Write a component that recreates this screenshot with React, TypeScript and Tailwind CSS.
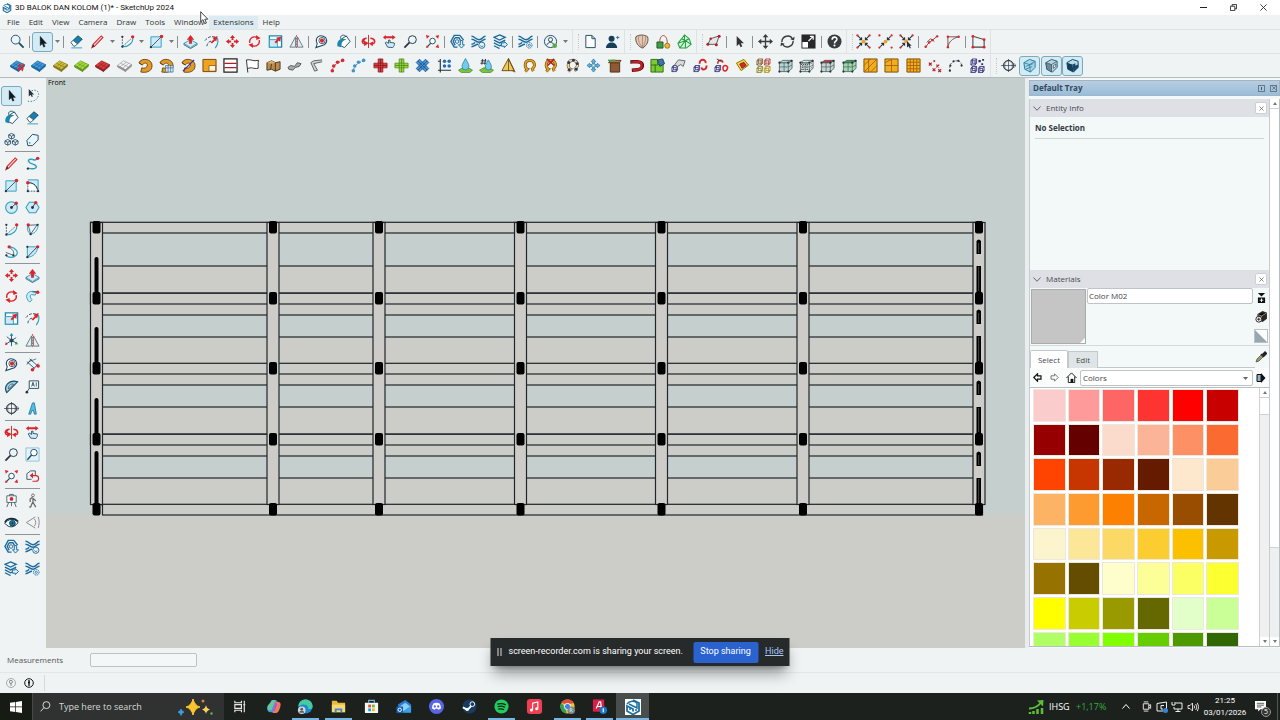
import { useState } from "react";
import type { ReactNode } from "react";

const RED = "#d9262c";
const TEAL = "#2f9fc0";
const PALE = "#cfeaf5";
const NAVY = "#1f4a63";
const TRIM = "#1c6a9c";
const INK = "#26323c";

// small square/round end points used by most draw tools
const Dot = ({ x, y, c = INK, r = 1.2 }: { x: number; y: number; c?: string; r?: number }) => (
  <circle cx={x} cy={y} r={r} fill={c} stroke="none" />
)

const Sheet = ({ top, side }: { top: string; side: string }) => (
  <g stroke={side} strokeWidth=".6">
    <path d="M.5 8 7 3l8.500 4L9 12.500Z" fill={top} />
    <path d="M.5 8v1.500L9 14.500v-2zM15.500 7v1.800L9 14.500v-2z" fill={side} />
    <path d="m3.700 5.600 8.600 4.200M3.300 9.300 10 4.500M6 10.900l6.500-5.200" />
  </g>
)

const Hook = ({ c = "#e6a21b", children }: { c?: string; children?: ReactNode }) => (
  <>
    <path d="M3.500 14.500 6 12C2 10 2.500 2.500 8 2.500s7 6 3 9l1 2.500" stroke="#5f4310" strokeWidth="3" />
    <path d="M3.500 14.500 6 12C2 10 2.500 2.500 8 2.500s7 6 3 9l1 2.500" stroke={c} strokeWidth="1.800" />
    {children}
  </>
)

const Bend = ({ children }: { children?: ReactNode }) => (
  <>
    <path d="M1 5C4-1 15 1 15 8s-7 8-12 7l1-4.500c3 1 6 0 6-3S6 5 4.500 7.500Z" fill="#e39a26" stroke="#5d3b0d" strokeWidth=".9" />
    <path d="m1 5 3.500 2.500" stroke="#5d3b0d" />
    {children}
  </>
)

const Plus = ({ c, dark }: { c: string; dark: string }) => (
  <path d="M5.500 1h5v4.500H15v5h-4.500V15h-5v-4.500H1v-5h4.500zM5.500 5.500h5v5h-5zM8 1v14M1 8h14" fill={c} stroke={dark} strokeWidth=".8" />
)

const Cage = ({ fill, top }: { fill: string; top?: string }) => (
  <>
    <path d="M1.500 5H11l4-2v8l-4 3.500H1.500z" fill={fill} stroke="#3c5a58" strokeWidth=".8" />
    <path d="m1.500 5 3.500-2.500h10L11 5z" fill={top ?? fill} stroke="#3c5a58" strokeWidth=".8" />
    <path d="M11 5v9.500M1.500 9.500H11l4-2M6.500 5v9.500" stroke="#3c5a58" strokeWidth=".7" />
    <Dot x={1.500} y={5} /><Dot x={11} y={5} /><Dot x={1.500} y={14.500} /><Dot x={11} y={14.500} /><Dot x={14.500} y={3} />
  </>
)

const Cube = ({ x = 0, y = 0, c = "#38317c" }: { x?: number; y?: number; c?: string }) => (
  <path
    transform={`translate(${x} ${y})`}
    d="M1 3h4.500v4.500H1zM2.500 1H7v4.500H2.500zM1 3l1.500-2M5.500 3 7 1M5.500 7.500 7 5.500M1 7.500l1.500-2"
    stroke={c}
    strokeWidth=".9"
  />
)

const Layers = () => (
  <path d="M.5 2.500c4 0 4 3.500 8 3.500s3.500-3.500 7-3.500M.5 5.500c4 0 4 3.200 8 3.200s3.500-3.200 7-3.200M.5 13.500c3.500 0 4-2.500 7-2.500M.5 10.800c2.500 0 3-1.300 4-1.800" stroke={TRIM} strokeWidth="1.600" />
)

const Grid = ({ d }: { d: string }) => (
  <>
    <path d="M1 1h14v14H1z" fill="#f2ae1c" stroke="#7c4b06" />
    <path d={d} stroke="#a4600a" strokeWidth=".9" />
  </>
)

const Snap = ({ d, children }: { d: string; children?: ReactNode }) => (
  <>
    <path d={d} stroke={INK} strokeWidth="1.100" />
    {children}
  </>
)

const icons: Record<string, ReactNode> = {
  Search: <><circle cx="6" cy="6" r="4.700" fill="#e8f6fb" stroke={NAVY} /><path d="m9.500 9.500 5 5" stroke={NAVY} strokeWidth="2" /></>,
  Select: <path d="M5.500 2.500v10l2.200-2 1.600 3.500 1.500-.8L9.300 10h3z" fill="#101820" stroke="#101820" strokeWidth=".4" />,
  Lasso: <><path d="M7 3c5-2 9 1 7 6s-7 6-11 5" stroke="#2f86a8" strokeDasharray="1.500 1.500" /><path d="M4 1v8l2-1.700 1.200 2.400 1.200-.7L7.300 7h2.400z" fill={INK} /></>,
  Eraser: <><path d="m2 9 7.500-7L14 5.500 6.500 13H5z" fill="#fff" stroke={NAVY} strokeWidth=".9" /><path d="m4.500 7 5-5L14 5.500l-5 5z" fill="#167fae" stroke={NAVY} strokeWidth=".7" /><path d="M2.500 14.800H14" stroke={TEAL} /></>,
  Pencil: <><path d="M2 14.500 3.300 11 12 2l1.800 1.700L5 13z" fill="#f6d8d8" stroke={RED} strokeWidth="1.100" /><path d="m2 14.500 1.300-3.500L5 13z" fill={INK} /></>,
  Freehand: <><path d="M3 13c9 2 12-2 6-4S2 4 6 3.500 10 6 13 3" stroke={TEAL} strokeWidth="1.500" /><Dot x={3} y={13.500} /><Dot x={13.500} y={2.500} c={RED} r={1.800} /></>,
  Arc: <><path d="M2.500 2.500v11L12 5" stroke={NAVY} strokeWidth=".8" strokeDasharray="2 1" /><path d="M13.500 3c1 6-4 11-11 10.500" stroke={TEAL} strokeWidth="1.200" /><Dot x={2.500} y={3} /><Dot x={2.500} y={13.500} /><Dot x={13.500} y={3} c={RED} r={1.800} /></>,
  Rectangle: <><path d="M2 3h11v11H2z" fill={PALE} stroke={TEAL} /><path d="m2 14 11-11" stroke={NAVY} strokeWidth=".9" /><Dot x={2} y={14} /><Dot x={13.300} y={2.700} c={RED} r={1.900} /></>,
  "Rotated Rectangle": <><path d="M3 2h11v12" fill={PALE} stroke={TEAL} /><path d="M3 5v9h11C13 8 9 5 3 5z" fill="#fff" stroke={NAVY} strokeWidth=".9" strokeDasharray="2 1" /><path d="M3 5c6 0 9 3 10 7" stroke={NAVY} /><Dot x={3} y={5} c={RED} r={1.900} /><Dot x={3} y={14} /><Dot x={14} y={14} /></>,
  Circle: <><circle cx="8" cy="8" r="6.200" fill={PALE} stroke={TEAL} strokeWidth="1.200" /><path d="m8 8 4.500-4" stroke={NAVY} /><Dot x={8} y={8} r={1.500} /><Dot x={13} y={3.500} c={RED} r={1.800} /></>,
  Polygon: <><path d="M4.500 2.500h7L15 8l-3.500 5.500h-7L1 8z" fill={PALE} stroke={TEAL} strokeWidth="1.100" /><path d="m8 8 3-5" stroke={NAVY} /><Dot x={8} y={8} r={1.500} /><Dot x={11.500} y={2.800} c={RED} r={1.800} /></>,
  "2 Point Arc": <><path d="M3.500 3.500 13 3 6 13z" stroke={NAVY} strokeWidth=".8" /><path d="M3 4c-1 4 0 7 3 9 5-1 7-4 8-9" stroke={TEAL} /><Dot x={3.500} y={3} c={RED} r={1.800} /><Dot x={13.500} y={3} /><Dot x={6} y={13} /></>,
  "3 Point Arc": <><path d="M6 3c7 1 10 6 7 9s-8 3-11 0" stroke={TEAL} strokeWidth="1.200" /><path d="M6 4c4 2 5 5 4 8M2 9l8 3" stroke={NAVY} strokeWidth=".8" /><Dot x={5.500} y={3} c={RED} r={1.800} /><Dot x={2.500} y={12} /><Dot x={10} y={12} /></>,
  Pie: <><path d="M2.500 3v11C9 14 13 9 13.500 3z" fill={PALE} stroke={TEAL} /><path d="M2.500 14 13 3" stroke={NAVY} /><Dot x={2.500} y={3} /><Dot x={2.500} y={14} /><Dot x={13.500} y={3} c={RED} r={1.800} /></>,
  "Push/Pull": <><path d="m1 10 7-4 7 4-7 4.500z" fill={PALE} stroke={TEAL} /><path d="M1 10v1.500l7 4 7-4V10" stroke={NAVY} strokeWidth=".8" /><path d="M6.500 10.500V6H4l4-5 4 5H9.500v4.500z" fill={RED} /></>,
  Offset: <><path d="M1 7c4-5 9-5 12-3M3 13c1-5 4-6 7-5" stroke={NAVY} strokeDasharray="3 1.500" /><path d="M14 4c2 4 1 7-2 11" stroke={TEAL} strokeWidth="1.200" /><path d="m7 9 3.500-3.500L9 4l5.500-2L13 8l-1.200-1.200L8.500 10z" fill={RED} /></>,
  Move: <path d="m8 1 2.700 3.300H9V6.500H7V4.300H5.300zM8 15l2.700-3.300H9V9.500H7v2.200H5.300zM1 8l3.300-2.700V7h2.200v2H4.300v1.700zM15 8l-3.300-2.700V7H9.500v2h2.200v1.700z" fill={RED} />,
  Rotate: <><path d="M3 9.500C2 5 6 2 10.500 3.500M13 6.500c1 4.500-3 7.500-7.500 6" stroke={RED} strokeWidth="1.500" /><path d="m9.500 1 5 3.500-4.500 1.800zM6.500 15l-5-3.500L6 9.700z" fill={RED} /></>,
  "Follow Me": <><path d="M5 14C-1 9 2 2 8 2.500l4 1-1 3-4-.5c-2 0-2 3 .5 5.500z" fill={PALE} stroke={TEAL} /><path d="M8 3h5.500" stroke={NAVY} /><Dot x={13.500} y={3.500} c={RED} r={1.900} /></>,
  Scale: <><path d="M1.500 2h13v12h-13z" fill="#fff" stroke="#1c86ad" strokeWidth="1.400" /><path d="M1.500 6H10v8H1.500z" fill={PALE} stroke={TEAL} /><path d="m7 8.500 3-3L8.500 4l5.500-1-1 5.500-1.500-1.500-3 3z" fill={RED} /></>,
  Flip: <><path d="M7 3v11H1zM9 3v11h6z" fill="#e3edf0" stroke="#566d78" strokeWidth=".9" /><path d="M8 1v14" stroke={RED} strokeWidth=".8" strokeDasharray="2 1" /></>,
  Axes: <><path d="M8 8V2M8 8l6 3M8 8l-6 4M8 8 3 4M8 8l5-3M8 8v6" stroke={NAVY} strokeWidth=".9" /><path d="m8 0 2 3H6z" fill="#1688b5" /><path d="m15 12-3.500.3L13 9z" fill="#2c9a46" /><path d="m1 13 1-3.500 2 2.500z" fill={RED} /><Dot x={8} y={8} r={2.200} c={NAVY} /></>,
  "Tape Measure": <><path d="M2.500 8C2 3 6 1 10 2.500s5 6 1 9L2 14.500l1.500-4z" fill="#fff" stroke={NAVY} strokeWidth="1.100" /><circle cx="8.500" cy="7" r="3.300" stroke={NAVY} strokeWidth=".9" /><Dot x={8.500} y={7} c={RED} r={2.200} /></>,
  Dimension: <><path d="m2 5 8 7M5 2l8 7M2 8l5-6M9 13l5-6" stroke={NAVY} strokeWidth=".9" /><path d="M12 2 4 5" stroke={NAVY} strokeWidth=".7" /><Dot x={8} y={13.500} c={RED} r={1.900} /><Dot x={14} y={9.500} c={RED} r={1.900} /></>,
  Protractor: <><path d="M3 14.500C-1 8 5 0 14.500 3L3 14.500z" fill="#9bd1e6" stroke={NAVY} strokeWidth="1.200" /><path d="M5 10.500C4.500 7.500 7 5 10 5.500z" fill="#fff" stroke={NAVY} strokeWidth=".9" /></>,
  Text: <><path d="M4.500 2h10v8h-10z" stroke={NAVY} fill="#fff" /><path d="m7 8 1.500-4.500L10 8M7.500 6.500h2M12 3.500V8M4.500 10 2 14" stroke={NAVY} strokeWidth=".9" /><Dot x={2} y={14} r={1.400} /></>,
  "Section Plane": <><circle cx="8" cy="8" r="5.500" stroke={INK} strokeWidth=".9" /><path d="M0 8h16M8 1v14M4 5l4-2.500L12 5v6l-4 2.500L4 11zM13.500 5.500 16 8l-2.500 2.500" stroke={INK} strokeWidth=".7" /></>,
  "3D Text": <path d="m4 14 4-12h2l2 12h-2l-1-4H7.500L6 14z" fill="#58bbdf" stroke="#187ba2" strokeWidth=".9" />,
  Paint: <><path d="m5 6 6-4 4 6-6 6.500L4 12z" fill="#fff" stroke={NAVY} /><path d="M1.500 13C1 8 3 5 8 5c2 0 3 1 3 1-4 1-5 2-5.500 8z" fill="#1c86ad" /><path d="M5 5c-1-4 4-5 6-2" stroke={NAVY} /></>,
  Components: <path d="M8 1.500 11 3v3L8 7.500 5 6V3zM4 8l3 1.500v3L4 14l-3-1.500v-3zM12 8l3 1.500v3L12 14l-3-1.500v-3zM5 3l3 1.500L11 3M8 4.500v3M1 9.500 4 11l3-1.500M4 11v3M9 9.500l3 1.500 3-1.500M12 11v3" stroke={NAVY} strokeWidth=".9" />,
  Tag: <><path d="m2 9 6-6.500 6 1v5L8 14.500H3z" fill="#e8f6fb" stroke={NAVY} /><Dot x={5} y={11.500} r={0.900} c={TEAL} /></>,
  Orbit: <><path d="M6 4.500C1 4.500.5 9 3 10.500M10 4.500c5 0 5.500 4.500 3 6M4.500 5C1 7 4 9.500 7 9.500" stroke={RED} strokeWidth="1.700" /><path d="m3 8 4.500 2L3.500 13zM13 8l-4.500 2 4 3z" fill={RED} /><path d="M8 1v14" stroke={RED} strokeWidth="1" /></>,
  Pan: <><path d="M1 3.500 4 1v1.500h7V1l3.500 2.500L11 6V4.500H4V6z" fill={RED} /><path d="M6 14 3.500 9.500l1-1L7 10V6.500h1.500V9L13 9.500c1 2-.5 3.500-1.500 5z" fill={PALE} stroke={NAVY} strokeWidth=".9" /></>,
  Zoom: <><circle cx="10" cy="6" r="4.200" fill="#e8f6fb" stroke={INK} /><path d="m7 9-5.500 5.500" stroke={INK} strokeWidth="1.800" /></>,
  "Zoom Window": <><path d="M1 1h14v14H1z" stroke="#8bc2d6" fill="#e4f3f8" /><circle cx="9.500" cy="6" r="3.500" fill="#fff" stroke={NAVY} /><path d="m7 8.500-4.500 5" stroke={NAVY} strokeWidth="1.500" /></>,
  "Zoom Extents": <><circle cx="8" cy="7.500" r="3" stroke={NAVY} fill="#fff" /><path d="m6 10-4 4" stroke={NAVY} strokeWidth="1.300" /><path d="m1 1 4 1-3 3zM15 1l-1 4-3-3zM15 15l-4-1 3-3zM1 15l1-3 2 2z" fill={RED} /></>,
  Previous: <><path d="M2 11V5l4-3h5v5M2 11h5" stroke={NAVY} strokeWidth=".9" /><path d="M7 7h4.500c4 0 4 6 0 6H8" stroke={RED} strokeWidth="1.200" /><path d="m5 7 3.500-3v6z" fill={RED} /></>,
  "3D Warehouse": <><path d="M10.500 1.500h-6L1 8l3.500 6H8M10.500 1.500l4 5M5.500 4h4l1.800 3M5.500 4 3.500 8l2 4" stroke={TRIM} strokeWidth="1.500" /><path d="m5.700 7 1.800-1 1.800 1v2L7.500 10 5.700 9z" stroke={TRIM} /><path d="M11 7h2.500v4.500h2L12.200 15 9 11.500h2z" fill="#d9eef7" stroke={TRIM} /></>,
  "Share Model": <><Layers /><circle cx="11.500" cy="12" r="3.300" fill="#eaf5fa" stroke={TRIM} /><path d="M10 12.500c1 1 2 1 3 0" stroke={TRIM} /></>,
  "Share Component": <><path d="m7 1 6 2.500-6 3-6-3zM1 6.500l6 3 6-3M1 9.500l6 3 2-.7M1 12.500l6 3" stroke={TRIM} strokeWidth="1.400" /><path d="M9 9.500h3V8l3.500 3.200L12 14.500V13H9z" fill="#d9eef7" stroke={TRIM} /></>,
  "Extension Manager": <><Layers /><circle cx="12" cy="12" r="3" fill="#eaf5fa" stroke={TRIM} strokeDasharray="1.500 .700" /><circle cx="12" cy="12" r="1.200" stroke={TRIM} strokeWidth=".8" /></>,
  Account: <><circle cx="8" cy="8" r="6.500" stroke={NAVY} /><circle cx="8" cy="6" r="2.200" stroke={NAVY} /><path d="M4 12c1-4 7-4 8 0" stroke={NAVY} /><circle cx="12.500" cy="12.500" r="2.500" fill="#55ad49" /></>,
  "New File": <path d="M3 1.500h6.500L13 5v9.500H3zM9.500 1.500V5H13" fill="#fff" stroke={NAVY} />,
  "Add Person": <><circle cx="7" cy="5" r="3.200" fill="#15405c" /><path d="M1 15c0-8 12-8 12 0z" fill="#15405c" /><path d="M13.500 2v3.500M11.800 3.700h3.500" stroke="#2d7da6" /></>,
  Shell: <><path d="M2 3c3-2.500 9-2.500 12.500 0 1.500 5-1 9-5 12C5 14 1 9 2 3z" fill="#e4c8b4" stroke="#5e4636" /><path d="M5 2c-1 5 1 9 4.500 13M9 1.500V14M12.500 2.500c0 4-1 8-3 12" stroke="#9c7e6c" strokeWidth=".8" /></>,
  "Rope Box": <><path d="M1 8.500h6.500V15H1z" fill="#3f9c4b" stroke="#1e5c28" /><path d="M4 8.500c0-9.500 8-9 8 1" stroke="#b43a31" /><circle cx="12" cy="12.500" r="2.700" fill="#f0b43c" stroke="#a56f10" /></>,
  "Green Gem": <path d="m8 1 5 4 2 6-5 4H3l-2-5 4-5zM5 5l4 2 4-2M9 7v8M9 7l-6 8M1 10l8-3 6 4M8 1v6" fill="#d9f3da" stroke="#1fa03f" strokeWidth="1.100" />,
  "Edit Polygon": <><path d="m2 11 3-6 9-3-3 9z" stroke="#555" fill="#e3e7ea" /><Dot x={2} y={11} c="#b71c22" r={1.600} /><Dot x={5} y={5} c="#b71c22" r={1.300} /><Dot x={14} y={2.500} c="#b71c22" r={1.600} /><Dot x={11} y={11.500} c="#b71c22" r={1.600} /></>,
  "Dark Select": <path d="M5 2v11l2.500-2.300L9.200 14l1.800-.9-1.600-3.300h3.300z" fill="#333" />,
  "Dark Move": <path d="m8 0 3 3.500H8.700v3.800h3.800V5L16 8l-3.500 3V8.700H8.700v3.800H11L8 16l-3-3.500h2.300V8.700H3.500V11L0 8l3.500-3v2.300h3.800V3.500H5z" fill="#3a3d40" />,
  "Dark Rotate": <><path d="M2 8.500C2 1.500 11 .5 13 5M14 7.500c0 7-9 8-11 3.500" stroke="#3a3d40" strokeWidth="1.500" /><path d="m15.500 3-.5 4-4-1.500zM.5 13l.5-4 4 1.500z" fill="#3a3d40" /></>,
  "Dark Scale": <><path d="M.5.5h15v15H.5z" fill="#26282a" /><path d="M1.500 8.500h6v6h-6z" fill="#fff" /><path d="m8 7.500 5-5M9.500 2.500H13V6" stroke="#fff" strokeWidth="1.300" /></>,
  Help: <><circle cx="8" cy="8" r="7.500" fill="#3a3d40" /><path d="M5.500 6c0-3.500 5.500-3.500 5 0-.3 1.700-2.500 1.500-2.500 4" stroke="#fff" strokeWidth="1.700" /><Dot x={8} y={12.300} c="#fff" r={1.100} /></>,
  "Snap Both": <Snap d="M2 2l4 4M14 2l-4 4M2 14l4-4M14 14l-4-4M6 3.500V6H3.500M10 3.500V6h2.500M6 12.500V10H3.500M10 12.500V10h2.500"><Dot x={8} y={8} c="#eda01c" r={2} /><Dot x={1.500} y={1.500} c={RED} /><Dot x={14.500} y={1.500} c={RED} /><Dot x={1.500} y={14.500} c={RED} /><Dot x={14.500} y={14.500} c={RED} /></Snap>,
  "Snap Mid": <Snap d="M13.500 2.500 10 6M2.500 13.500 6 10M10 3.500V6h2.500M6 12.500V10H3.500"><Dot x={8} y={8} c="#eda01c" r={2} /><Dot x={1.500} y={1.500} c={RED} /><Dot x={14.500} y={1.500} c={RED} /><Dot x={1.500} y={14.500} c={RED} /><Dot x={14.500} y={14.500} c={RED} /></Snap>,
  "Snap Pick": <Snap d="M2 2l4 4M14 2l-4 4M2 14l4-4M6 3.500V6H3.500M10 3.500V6h2.500M6 12.500V10H3.500"><Dot x={7.500} y={7.500} c="#eda01c" r={2} /><path d="M8.500 7.500v7l1.700-1.500 1.500 2.500 1-.7-1.200-2.300h2z" fill={INK} /><Dot x={1.500} y={1.500} c={RED} /><Dot x={14.500} y={1.500} c={RED} /><Dot x={1.500} y={14.500} c={RED} /></Snap>,
  Polyline: <><path d="m1.500 14 4-5 3-2 6-5M3 9l4-4 4 3" stroke="#7a4a4a" /><Dot x={1.800} y={13.500} c={RED} r={1.300} /><Dot x={5.500} y={9} c={RED} r={1.300} /><Dot x={9} y={6.500} c={RED} r={1.300} /><Dot x={14} y={2.500} c={RED} r={1.300} /></>,
  Spline: <><path d="M2 3h11M2 3v11M2 14C3 8 7 5 13 3" stroke="#7a4a4a" /><Dot x={2} y={3} c={RED} r={1.300} /><Dot x={13.500} y={3} c={RED} r={1.300} /><Dot x={2} y={14} c={RED} r={1.300} /></>,
  Trapezoid: <><path d="M2 2.500 14 6v8H2z" stroke="#444" strokeWidth="1.100" /><Dot x={2} y={2.500} c={RED} r={1.500} /><Dot x={14} y={6} c={RED} r={1.500} /><Dot x={14} y={14} c={RED} r={1.500} /><Dot x={2} y={14} c={RED} r={1.500} /></>,
  "Sheet Number": <><Sheet top="#3e9bdb" side="#17609a" /><path d="m10.500 6-1 8M14 6l-1 8M8.500 8.500H15M8 11.500h6.500" stroke={RED} strokeWidth="1.300" /></>,
  "Blue Sheet": <Sheet top="#3e9bdb" side="#17609a" />,
  "Olive Sheet": <Sheet top="#cdbd35" side="#80731b" />,
  "Green Sheet": <Sheet top="#a2dc39" side="#5f8f1b" />,
  "Red Sheet": <Sheet top="#dc3a3c" side="#8d1b1e" />,
  "White Sheet": <Sheet top="#f4f4f4" side="#8d8d8d" />,
  Bend: <Bend />,
  "Bend Grid": <Bend><path d="M7 8h8v7H7zM7 10.500h8M9.700 8v7M12.400 8v7" fill="#d7e8f4" stroke="#48708d" strokeWidth=".8" /></Bend>,
  "Bend Axis": <Bend><path d="m2 14 12-12" stroke="#3c2d96" strokeWidth="1.300" /></Bend>,
  "Orange Corner": <><path d="M1 1.500h14v13H1z" fill="#f0a31f" stroke="#714608" /><path d="M7.500 8h7v6h-7z" fill="#fff3d9" stroke="#714608" strokeWidth=".7" /></>,
  Shelf: <><path d="M1 1h14v14H1z" fill="#fff" stroke="#222" strokeWidth="1.300" /><path d="M1.500 5.700h13M1.500 10.300h13" stroke="#a62027" strokeWidth="1.300" /></>,
  Flag: <path d="M3 15.500 1.500 2c5-1 7 2 13 .5-1 3 0 5-.5 8.500C9 12 7 9 2.500 11.500" fill="#fff" stroke="#2d2d2d" />,
  Block: <><path d="M1 5 6 3l4 2 5-1v8l-5 2-4-2-5 1z" fill="#bb8c4f" stroke="#4c3517" /><path d="m6 5-1 7M10 5v9" stroke="#4c3517" /><path d="m6 3 4 2-4 1-5-1z" fill="#d8b272" /></>,
  Twist: <path d="m1 10 3-2 4 1 3-4 4 1-2 3-4 1-3 3-4-1z" fill="#a8abae" stroke="#46494c" strokeWidth=".9" />,
  Gutter: <path d="M14 2 5 3 2 5l4 9 3-1-4-7 9-2" fill="#d3d5d7" stroke="#4d5052" strokeWidth=".9" />,
  "Red Nodes": <><path d="M2 14 4 9l4-4 6-2" stroke="#8d3d3d" strokeDasharray="1.500 1" /><Dot x={2.500} y={13.500} c={RED} r={1.900} /><Dot x={4} y={8.500} c={RED} r={1.900} /><Dot x={8} y={4.500} c={RED} r={1.900} /><Dot x={13.500} y={2.500} c={RED} r={1.900} /></>,
  "Blue Nodes": <><path d="M2 14 4 9l4-4 6-2" stroke="#4a7596" strokeDasharray="1.500 1" /><Dot x={2.500} y={13.500} c="#3e94cf" r={1.900} /><Dot x={4} y={8.500} c="#3e94cf" r={1.900} /><Dot x={8} y={4.500} c="#3e94cf" r={1.900} /><Dot x={13.500} y={2.500} c="#3e94cf" r={1.900} /></>,
  "Red Cross": <Plus c="#dd3b3f" dark="#871a1e" />,
  "Green Cross": <Plus c="#9bd93a" dark="#4b851a" />,
  "Blue Cross": <g transform="rotate(45 8 8)"><Plus c="#4595d8" dark="#1b4e86" /></g>,
  Array: <><path d="M3.500 1v12H15M1 3.500h2.500M1 13h2.500M3.500 15.500V13" stroke={INK} strokeWidth="1.200" /><Dot x={8} y={3.500} c="#286db0" r={1.900} /><Dot x={13} y={3.500} c="#286db0" r={1.900} /><Dot x={8} y={8.500} c="#286db0" r={1.900} /><Dot x={13} y={8.500} c="#286db0" r={1.900} /></>,
  Drop: <><path d="m.5 13 4.500-2.500h6l4.500 2.500-3 2.500h-9z" fill="#7cc23a" stroke="#417d1b" strokeWidth=".7" /><path d="M8 .5C6 4.500 4.300 6.500 4.300 9a3.700 3.700 0 0 0 7.400 0C11.700 6.500 10 4.500 8 .5z" fill="#74cbe8" stroke="#2280a6" strokeWidth=".8" /></>,
  "Drop Number": <><path d="m.5 13 4.500-2.500h6l4.500 2.500-3 2.500h-9z" fill="#7cc23a" stroke="#417d1b" strokeWidth=".7" /><path d="M10 2C8 5.500 6.700 7.500 6.700 9.500a3.300 3.300 0 0 0 6.600 0C13.300 7.500 12 5.500 10 2z" fill="#74cbe8" stroke="#2280a6" strokeWidth=".8" /><path d="m4 1-1 6M7 1 6 7M2 3h6M1.500 5.500h6" stroke={INK} /></>,
  Pyramid: <><path d="M8 .5 1 13.500h13z" fill="#f0c95c" stroke="#6b4e12" /><path d="M8 .5v13M8 1l6 12 1 2-3-1.500" stroke="#6b4e12" strokeWidth=".9" /></>,
  Loop: <Hook />,
  "Cut Loop": <Hook><path d="m4 1 8 7M12 1 5 8" stroke="#b41f25" strokeWidth="1.700" /></Hook>,
  "Node Loop": <Hook c="#e8d9a4"><Dot x={4} y={5} c="#2b2f6b" r={1.500} /><Dot x={9} y={2.300} c="#2b2f6b" r={1.500} /><Dot x={13} y={6} c="#2b2f6b" r={1.500} /><Dot x={4.500} y={12.500} c="#2b2f6b" r={1.500} /><Dot x={12} y={12} c="#2b2f6b" r={1.500} /></Hook>,
  "Blue Move": <path d="m8 1 2.500 3H9v2.500H7V4H5.500zM8 15l2.500-3H9V9.500H7V12H5.500zM1 8l3-2.500V7h2.500v2H4v1.500zM15 8l-3-2.500V7H9.500v2H12v1.500z" fill="#63b8e2" stroke="#256b96" strokeWidth=".7" />,
  Box: <><path d="M3.500 5h10v10h-10z" fill="#8e5a34" stroke="#4a2c14" /><path d="m1.500 5 2.500-2.500h11L13.500 5z" fill="#b07a4b" stroke="#4a2c14" strokeWidth=".8" /><path d="M1 2.500h8" stroke="#3fa04a" strokeWidth="1.500" /></>,
  Magnet: <><path d="M2 4h7c7 0 7 8 0 8.500L3 13" stroke="#6d0d12" strokeWidth="3.800" /><path d="M3.500 4H9c6 0 6 8 0 8.500L4 13" stroke="#c42329" strokeWidth="2.200" /><path d="M2 2v4" stroke="#555" strokeWidth="1.500" /></>,
  Swap: <><path d="M1 1.500h7V7h6v8H1z" fill="#7ccb31" stroke="#2e6d12" /><path d="m8 2 5.500-1 2 5-5 3z" fill="#3e74a8" stroke="#1d3f63" /><path d="M5.500 7v8M1 7.500h7" stroke="#2e6d12" /></>,
  "Cube Arrow": <><Cube x={0} y={7} /><path d="m4 7 4-5 7 1-2 6-2.500-2L7 9z" fill="#d7dade" stroke="#555" strokeWidth=".9" /></>,
  "Cube Rotate": <><Cube x={0} y={7} /><path d="M7 6c0-6 7-5 6.500-.5M14.500 8c0 5-5 5.500-5.500 2" stroke={RED} strokeWidth="2" /></>,
  "Cube Rotate 2": <><Cube x={0} y={7} /><path d="M4 6c0-4.500 5-4.500 5.500-1M14.500 9c0 6-5 6-5 2s5-4 5 0z" stroke={RED} strokeWidth="1.600" /><path d="m3 1 5 3" stroke="#333" /></>,
  Diamond: <><path d="m1.500 5.500 8-4 5 6-8 6z" fill="#f4dc3b" stroke="#826e10" /><path d="m5 6.500 4.500-2 2.500 3.500L7.500 11z" fill={RED} stroke="#7c1115" strokeWidth=".8" /></>,
  "Four Cubes": <><Cube c="#83592f" /><Cube x={8} c="#b0463c" /><Cube y={8} c="#8a8c22" /><Cube x={8} y={8} c="#b59516" /></>,
  Cage: <Cage fill="#bcd3d1" />,
  "Cage Dense": <><Cage fill="#e3ebea" /><path d="M4 5v9M8.500 5v9M2 7h9l3-2M2 12h9l3-2" stroke="#222" strokeWidth=".8" strokeDasharray="1.200 1" /></>,
  "Cage Red": <Cage fill="#c8d3d2" top="#d43238" />,
  "Cage Green": <Cage fill="#a4d6ac" top="#3aa34b" />,
  "Hatch Grid": <Grid d="m1 8 7-7M1 15 15 1M8 15l7-7M6 1v14" />,
  "Quad Grid": <Grid d="M8 1v14M1 8h14M1 5l7-3.500" />,
  "Fine Grid": <Grid d="M4.500 1v14M8 1v14M11.500 1v14M1 4.500h14M1 8h14M1 11.500h14" />,
  "Red Marks": <path d="m2 5 3 3M5 5 2 8M10 7l3 3M13 7l-3 3M6 11l3 3M9 11l-3 3M12 12l3 3M15 12l-3 3M7 2.500l1.500 1.500M8.500 2.500 7 4" stroke="#b2262c" strokeWidth="1.300" />,
  "Dotted Arc": <><path d="M2 14C1 7 4 3 9 3s5 3 6 6" stroke={INK} strokeDasharray="2 1.500" strokeWidth=".8" /><Dot x={2} y={13.500} /><Dot x={2.500} y={8} /><Dot x={6} y={3.500} /><Dot x={11} y={3} /><Dot x={14.500} y={8} /></>,
  "Cube Array": <><Cube /><Cube y={8} /><Cube x={8} y={8} /><path d="M9 2h2.500v2.500H9zM13 1h2v2h-2zM12 5.500h2v2h-2z" fill="#2b2f6b" /></>,
  "Section Fill": <><path d="m2 5 6-3.500 6 2V10l-5 5-6-3z" fill="#a8d8ea" stroke="#2a7796" /><path d="m2 5 6 2 6-3.500M8 7l1 8M4 9l8-3M4 12l7-3" stroke="#2a7796" strokeWidth=".8" /></>,
  "Section Cut": <><path d="m2 5 6-3.500 6 2V10l-5 5-6-3z" fill="#b9d3df" stroke="#33566a" /><path d="m2 5 6 2v8L3 12z" fill="#6f8b99" stroke="#33566a" strokeWidth=".8" /><path d="m8 7 6-3.500M10 8l2.500-1.500V9L10 11z" fill="#e8f2f6" stroke="#33566a" strokeWidth=".8" /></>,
  "Section Display": <><path d="m2 5 6-3.500 6 2V10l-5 5-6-3z" fill="#b9dcea" stroke="#123f5c" /><path d="m2 5 6 2 1 8-6-3z" fill="#123f5c" /><path d="m8 7 3-1.500V8l3-1v3l-5 5z" fill="#17496a" /></>,
  Camera: <><path d="M3 3h10v7H3zM5 10l-2 5M11 10l2 5M8 10v4M6 3V1.500h4V3" stroke="#3d5564" strokeWidth=".9" fill="#fff" /><Dot x={8} y={6.300} c={RED} r={2} /></>,
  Walk: <><circle cx="8.500" cy="2.500" r="1.500" stroke="#666" strokeWidth=".9" /><path d="m8 4.500-2.500 2v3M8.500 5v5l3 5M8 10l-2 5-1.500-.3M9 6l2.500 2.500" stroke="#666" strokeWidth="1.300" /></>,
  "Look Around": <><path d="M1 9c3-5 10-6 14-1-4 6-10 6-14 1z" fill="#fff" stroke="#0d2f43" /><path d="M1 8c2-5 10-6 14-1" stroke="#0d2f43" strokeWidth="1.800" /><circle cx="9" cy="8.800" r="3" fill="#1a87b3" stroke="#0d2f43" /><Dot x={9} y={8.800} c="#0d2f43" r={1.200} /></>,
  "Field of View": <><path d="M11 2 1.500 8 11 14" stroke="#888" /><path d="M10 4c2 3 2 5 0 8M14 2c1.500 4 1.500 8 0 12" stroke="#888" /></>,
}

const draw = [
  "Search", "|", "Select*", "v", "|", "Eraser", "Pencil", "v", "Arc", "v", "Rectangle", "v", "|", "Push/Pull", "Offset", "Move", "Rotate",
  "Scale", "Flip", "|", "Tape Measure", "Paint", "|", "Orbit", "Pan", "Zoom", "Zoom Extents", "|", "3D Warehouse", "Share Model",
  "Share Component", "|", "Extension Manager", "|", "Account", "v",
]
const edit = ["Edit Polygon", "|", "Dark Select", "|", "Dark Move", "Dark Rotate", "Dark Scale", "|", "Help"]
const snaps = ["Snap Both", "Snap Mid", "Snap Pick", "|", "Polyline", "Spline", "|", "Trapezoid"]
const plugins = [
  "Sheet Number", "Blue Sheet", "Olive Sheet", "Green Sheet", "Red Sheet", "White Sheet", "Bend", "Bend Grid", "Bend Axis", "Orange Corner",
  "Shelf", "Flag", "Block", "Twist", "Gutter", "Red Nodes", "Blue Nodes", "Red Cross", "Green Cross", "Blue Cross", "Array", "Drop",
  "Drop Number", "Pyramid", "Loop", "Cut Loop", "Node Loop", "Blue Move", "Box", "Magnet", "Swap", "Cube Arrow", "Cube Rotate",
  "Cube Rotate 2", "Diamond", "Four Cubes", "Cage", "Cage Dense", "Cage Red", "Cage Green", "Hatch Grid", "Quad Grid", "Fine Grid",
  "Red Marks", "Dotted Arc", "Cube Array",
]
const sections = ["Section Plane", "Section Fill*", "Section Cut*", "Section Display*"]

const palette: (string[] | null)[] = [
  ["Select*", "Lasso"], ["Paint", "Eraser"], ["Components", "Tag"], null,
  ["Pencil", "Freehand"], ["Rectangle", "Rotated Rectangle"], ["Circle", "Polygon"], ["Arc", "2 Point Arc"], ["3 Point Arc", "Pie"], null,
  ["Move", "Push/Pull"], ["Rotate", "Follow Me"], ["Scale", "Offset"], ["Axes", "Flip"], null,
  ["Tape Measure", "Dimension"], ["Protractor", "Text"], ["Section Plane", "3D Text"], null,
  ["Orbit", "Pan"], ["Zoom", "Zoom Window"], ["Zoom Extents", "Previous"], null,
  ["Camera", "Walk"], ["Look Around", "Field of View"], null,
  ["3D Warehouse", "Share Model"], ["Share Component", "Extension Manager"],
]

const swatches = [
  "#fbcccc", "#fe9a9a", "#fe6565", "#fd3432", "#ff0000", "#c90000",
  "#960000", "#650000", "#fbdccc", "#fcb498", "#fd9064", "#fb6a30",
  "#ff4300", "#c83600", "#982900", "#651b00", "#fde7cd", "#facd98",
  "#fdb364", "#fd9a30", "#fd8100", "#c86700", "#984d00", "#633400",
  "#fbf4cc", "#fbe797", "#fbd964", "#fbcd30", "#fbc000", "#c89a00",
  "#967300", "#654d00", "#fdfecb", "#fcff98", "#fbff64", "#fcff30",
  "#ffff00", "#c9cd00", "#989a00", "#656700", "#e2ffca", "#caff98",
  "#b0ff64", "#98ff30", "#80ff00", "#66cd00", "#4c9a00", "#316700",
]

function Tool({ name }: { name: string }) {
  const active = name.endsWith("*")
  const key = name.replace("*", "")
  return (
    <button
      type="button"
      aria-label={key}
      className={
        active
          ? "flex h-5 w-[21px] shrink-0 items-center justify-center rounded-[3px] border border-[#7ea9bd] bg-[#d3ebf4]"
          : "flex h-5 w-[21px] shrink-0 items-center justify-center rounded-[3px]"
      }
    >
      <svg viewBox="0 0 16 16" fill="none" className="size-[15px] shrink-0">{icons[key]}</svg>
    </button>
  )
}

function ToolRow({ items }: { items: string[] }) {
  return (
    <>
      {items.map((item, i) => {
        if (item === "|") return <span key={i} className="mx-px h-3 w-[2px] shrink-0 border-l border-[#8b9094]" />
        if (item === "v") {
          return (
            <button key={i} type="button" aria-label="More" className="flex h-4 w-2 shrink-0 items-center justify-center">
              <svg viewBox="0 0 5 3" className="h-[3px] w-[5px]"><path d="M0 0h5L2.500 3z" fill="#777" /></svg>
            </button>
          )
        }
        return <Tool key={i} name={item} />
      })}
    </>
  )
}

const Grip = () => <span className="h-4 w-[6px] shrink-0 border-r border-dotted border-[#c4cacd]" />

const SketchUpMark = ({ className }: { className: string }) => (
  <svg viewBox="0 0 16 16" fill="none" className={className}>
    <path d="M8 1 14 4v8l-6 3.500L2 12V7l6 3v2.500" stroke="#1b6fa3" strokeWidth="1.800" />
    <path d="M2 5c2-3 8-4 10-.5V9L8 7 4 5M5 8v3M11 8v4" stroke="#1b6fa3" strokeWidth="1.500" />
  </svg>
)

// column / beam grid of the front elevation, in canvas units
const columns = [44, 220.5, 326.5, 468, 609, 750.5, 926.5]
const beams = [144, 215, 285, 356, 426]

function Model() {
  return (
    <svg viewBox="0 0 979 570" preserveAspectRatio="xMidYMid slice" className="block size-full" role="img" aria-label="Front view of beams and columns">
      <rect width="979" height="436" fill="#c5cfcd" />
      <rect y="436" width="979" height="134" fill="#cccdc8" />
      <g fill="#cccdc8" stroke="#20262a" strokeWidth="1.200">
        {beams.slice(0, 4).map((y, i) => (
          <g key={y}>
            {i > 0 && <rect x="56" y={y + 10} width="872" height="12" />}
            <rect x="56" y={y + 44} width="872" height="27" />
          </g>
        ))}
        {beams.map((y) => (
          <rect key={y} x={y === 426 ? 56.5 : 44.5} y={y + 0.3} width={y === 426 ? 880 : 888} height="10.700" />
        ))}
        {columns.map((x) => (
          <rect key={x} x={x + 0.5} y="144.500" width="12" height="282" fill="#cdccc9" />
        ))}
      </g>
      <g fill="#000">
        {columns.map((x) => beams.map((y) => <rect key={`${x}-${y}`} x={x + 2.5} y={y - 1} width="8" height="12.500" rx="2" />))}
        {[[179, 42], [249, 42], [320, 42], [373, 60]].map(([y, h]) => (
          <rect key={y} x="48.500" y={y} width="4" height={h} rx="2" />
        ))}
        {[161, 231, 302, 373].map((y) => (
          <g key={y}>
            <path d={`M930.500 ${y + 15}v-13q2.200-3 4.500 0v13z`} />
            <path d={`M932.700 ${y + 14}v-10`} stroke="#4b4949" />
            <path d={`M930.500 ${y + 27}h4.500v28h-4.500z`} />
            <path d={`M932.700 ${y + 28}v24`} stroke="#4b4949" />
          </g>
        ))}
      </g>
    </svg>
  )
}

const Close = ({ label }: { label: string }) => (
  <button type="button" aria-label={label} className="flex size-3 items-center justify-center rounded-[2px] border border-[#cdd0d5] bg-white">
    <svg viewBox="0 0 6 6" className="size-[5px]"><path d="m.5.5 5 5m0-5-5 5" stroke="#555" strokeWidth=".8" /></svg>
  </button>
)

function PanelTitle({ title }: { title: string }) {
  return (
    <div className="flex h-[18px] shrink-0 items-center bg-[#dfe0e6] pr-[2px] pl-[3px]">
      <svg viewBox="0 0 8 5" fill="none" className="h-[5px] w-2"><path d="m.5.5 3.500 3.800L7.500.5" stroke="#666" /></svg>
      <h2 className="ml-[5px] flex-1 text-[8px] text-[#444a50]">{title}</h2>
      <Close label={`Close ${title}`} />
    </div>
  )
}

const Arrow = ({ up }: { up?: boolean }) => (
  <span className="flex h-[9px] shrink-0 items-center justify-center bg-white">
    <svg viewBox="0 0 4 3" className="h-[3px] w-1"><path d={up ? "M0 3h4L2 0z" : "M0 0h4L2 3z"} fill="#777" /></svg>
  </span>
)

function Tray() {
  const [material, setMaterial] = useState("Color M02")

  return (
    <aside className="flex w-[255px] shrink-0 flex-col border-l-4 border-[#e9edef] bg-[#f3f8f9] pb-px">
      <div className="mt-[2px] flex h-4 shrink-0 items-center border border-[#a3b5c5] bg-linear-to-b from-[#b9cddf] to-[#98bedb] pr-[2px] pl-[3px]">
        <h1 className="flex-1 text-[8px] font-bold text-[#35475a]">Default Tray</h1>
        <button type="button" aria-label="Pin tray" className="mr-[5px] flex size-[7px] items-center justify-center border border-[#66798b]"><span className="h-[3px] w-px bg-[#44576a]" /></button>
        <button type="button" aria-label="Close tray" className="flex size-[7px] items-center justify-center border border-[#66798b]">
          <svg viewBox="0 0 6 6" className="size-1"><path d="m.5.5 5 5m0-5-5 5" stroke="#44576a" /></svg>
        </button>
      </div>
      <div className="mt-[3px] flex min-h-0 flex-1 border-r border-b border-[#b8bec4]">
        <div className="flex min-w-0 flex-1 flex-col border-x border-[#c6cbd0]">
          <PanelTitle title="Entity Info" />
          <div className="mx-[5px] h-[153px] shrink-0">
            <p className="border-b border-[#cfd3d6] pt-[5px] pb-1 text-[8px] leading-3 font-bold text-[#333a40]">No Selection</p>
          </div>
          <PanelTitle title="Materials" />
          <div className="flex h-[58px] shrink-0 border-b border-[#d5d9dc]">
            <div className="mt-px ml-px flex size-[55px] items-end justify-end border border-[#a9abad] bg-[#c5c5c5]">
              <svg viewBox="0 0 5 5" className="size-[5px]"><path d="M5 0v5H0z" fill="#fff" /></svg>
            </div>
            <input
              aria-label="Material name"
              value={material}
              onChange={(e) => setMaterial(e.target.value)}
              className="ml-px h-4 min-w-0 flex-1 rounded-[2px] border border-[#bfc4c8] bg-white px-px pb-[2px] text-[8px] text-[#444]"
            />
            <div className="flex w-4 flex-col items-center justify-between pt-[3px] pb-[2px]">
              <button type="button" aria-label="Display secondary pane" className="flex h-3 items-center">
                <svg viewBox="0 0 10 12" className="h-[11px] w-[9px]"><path d="M1 1h8L5 5zM1 6h8v6H1z" fill="#111" /><path d="M5 7v4M3 9h4" stroke="#fff" /></svg>
              </button>
              <button type="button" aria-label="Create material">
                <svg viewBox="0 0 12 12" className="size-[13px]"><path d="m2 4 5-3 4 1.500V8L7 11 3 9.500z" fill="#2a2622" /><path d="m2 4 4 1.500L11 2.500M6 5.500V10" stroke="#b8a98c" strokeWidth=".7" /><circle cx="3.500" cy="8.500" r="2.700" fill="#fff" stroke="#111" strokeWidth=".8" /><path d="M3.500 7v3M2 8.500h3" stroke="#111" strokeWidth=".8" /></svg>
              </button>
              <button type="button" aria-label="Default material" className="size-[14px] border border-[#b9c0c6] bg-white">
                <svg viewBox="0 0 12 12" className="size-3"><path d="M0 0v12h12z" fill="#97a7b0" /></svg>
              </button>
            </div>
          </div>
          <div className="flex h-[22px] shrink-0 items-end pr-[2px] text-[8px] text-[#444a50]">
            <button type="button" className="h-[18px] w-[38px] rounded-t-[2px] border border-b-0 border-[#c3c8cc] bg-white">Select</button>
            <button type="button" className="h-[17px] w-[30px] border border-b-0 border-[#c3c8cc] bg-[#dfe5e6]">Edit</button>
            <span className="flex-1 self-end border-b border-[#c3c8cc]" />
            <button type="button" aria-label="Sample paint" className="self-center">
              <svg viewBox="0 0 12 12" className="size-3"><path d="m1 11 1-3 4-4 2 2-4 4z" fill="#9b9a68" stroke="#444" strokeWidth=".7" /><path d="m6 3 3 3M7 4l3-3 1.500 1.500-3 3z" stroke="#222" strokeWidth="1.300" fill="#222" /></svg>
            </button>
          </div>
          <div className="flex h-[19px] shrink-0 items-center bg-[#fafcfc] pl-[3px]">
            <button type="button" aria-label="Back" className="mr-2"><svg viewBox="0 0 9 9" fill="none" className="size-[9px]"><path d="m.8 4.500 3.700-3.700v2H8v3.400H4.500v2z" stroke="#111" strokeWidth="1.200" /></svg></button>
            <button type="button" aria-label="Forward" className="mr-[7px]"><svg viewBox="0 0 9 9" fill="none" className="size-[9px]"><path d="M8.200 4.500 4.500.8v2H1v3.400h3.500v2z" stroke="#777" strokeWidth="1" /></svg></button>
            <button type="button" aria-label="In Model" className="mr-[3px]"><svg viewBox="0 0 12 12" fill="none" className="size-[11px]"><path d="M.5 6.500 6 1l5.500 5.500M2.500 5v6.500h7V5" stroke="#111" /><path d="M5 7.500h3v4H5z" fill="#111" /></svg></button>
            <div className="relative flex min-w-0 flex-1">
              <select aria-label="Library" className="h-4 w-full appearance-none rounded-[2px] border border-[#bfc4c8] bg-white px-[2px] text-[8px] text-[#444]">
                <option>Colors</option>
              </select>
              <svg viewBox="0 0 5 3" className="pointer-events-none absolute top-[7px] right-[5px] h-[3px] w-[5px]"><path d="M0 0h5L2.500 3z" fill="#666" /></svg>
            </div>
            <button type="button" aria-label="Details" className="flex w-4 justify-center"><svg viewBox="0 0 10 10" className="size-[10px]"><path d="M1 1.500h4v7H1z" fill="#8fb1d0" stroke="#111" /><path d="M5 0v10l4.500-5z" fill="#111" /></svg></button>
          </div>
          <div className="flex min-h-0 flex-1 border-t border-[#b8bec4] bg-white">
            <div className="min-w-0 flex-1 overflow-hidden pt-[2px] pl-1">
              <div className="grid w-[204px] grid-cols-6 gap-1">
                {swatches.map((color) => (
                  <button key={color} type="button" aria-label={color} style={{ backgroundColor: color }} className="aspect-square outline outline-[#ece8dd]" />
                ))}
              </div>
            </div>
            <div className="flex w-[10px] shrink-0 flex-col border-l border-[#cfd2d4] bg-[#f0f0f0]">
              <Arrow up />
              <span className="h-[18px] border-y border-[#cfd2d4] bg-white" />
              <span className="flex-1" />
              <Arrow />
            </div>
          </div>
        </div>
        <div className="flex w-[9px] shrink-0 flex-col bg-[#eeeff0]">
          <Arrow up />
          <span className="flex-[440] border-y border-[#cfd2d4] bg-white" />
          <span className="flex-[89]" />
          <Arrow />
        </div>
      </div>
    </aside>
  )
}

const apps: { name: string; open?: boolean; icon: ReactNode }[] = [
  { name: "Task View", icon: <path d="M3 3v2h7V3M3 15v-2h7v2M3 7h7v4H3zM13 3v12M12 7h2" stroke="#e8e8e8" strokeWidth="1.200" /> },
  { name: "Copilot", icon: <><path d="M7 2h4c2 0 2 3 3 5l-3 8H6c-3 0-4-2-3-5z" fill="#3b9be0" /><path d="M10 4h3c4 0 4 3 3 6s-2 6-5 6H8z" fill="#f2785c" /><path d="m8 2 3 0-4 11H4c-2 0-2-3-1-5z" fill="#67c5a2" /><path d="m11 4-3 10h2l3-7z" fill="#a05fd8" /></> },
  { name: "Edge", open: true, icon: <><circle cx="9" cy="9" r="7.500" fill="#1b8ad0" /><path d="M1.500 9c0-10 15-10 15 0 0 4-6 3-5 1 1-3-6-5-10-1z" fill="#45cba0" /><circle cx="5" cy="13" r="4" fill="#d5d9dc" /><Dot x={5} y={11.800} r={1.500} c="#5a6066" /><path d="M2.500 15.500c0-3 5-3 5 0z" fill="#5a6066" /></> },
  { name: "File Explorer", open: true, icon: <><path d="M2 3h5l1.500 2H16v10H2z" fill="#e9b73b" /><path d="M2 7h14v8H2z" fill="#f9d873" /><path d="M5 11h8v4h-2v-2H7v2H5z" fill="#3d8cd0" /></> },
  { name: "Microsoft Store", icon: <><path d="M2 5h14v10q0 1-1 1H3q-1 0-1-1z" fill="#f4f6f7" /><path d="M6 5V2.500h6V5" stroke="#62b7e0" strokeWidth="1.300" /><path d="M5.500 7h3v3h-3z" fill="#e8502d" /><path d="M9.500 7h3v3h-3z" fill="#7fb928" /><path d="M5.500 11h3v3h-3z" fill="#23a1e8" /><path d="M9.500 11h3v3h-3z" fill="#f5b71c" /></> },
  { name: "Outlook", icon: <><path d="m3 7 8-5 6 5v8H5z" fill="#2b7cd3" /><path d="m5 9 6-4 5 4-7 5z" fill="#8ed0f4" /><path d="m17 8-9 7.500h9z" fill="#38a3e8" /><path d="M1.500 9h7v7h-7z" fill="#1261b5" /><circle cx="5" cy="12.500" r="1.800" stroke="#fff" /></> },
  { name: "Discord", icon: <><circle cx="9" cy="9" r="8" fill="#5865e8" /><path d="M6 5.500c2-.7 4-.7 6 0 1.500 2 2 4 1.500 6L11 12.500l-1-1H8l-1 1-2.500-1c-.5-2 0-4 1.500-6z" fill="#fff" /><Dot x={7.200} y={9} c="#5865e8" /><Dot x={10.800} y={9} c="#5865e8" /></> },
  { name: "Steam", icon: <><circle cx="9" cy="9" r="7.500" fill="#183c60" /><path d="m2 10 5 2.500L12 7" stroke="#fff" strokeWidth="2" /><circle cx="12" cy="6.500" r="2.500" stroke="#fff" fill="#183c60" /><circle cx="6.500" cy="12" r="1.800" fill="#fff" /></> },
  { name: "Spotify", open: true, icon: <><circle cx="9" cy="9" r="7.500" fill="#22cc5c" /><path d="M4.500 6.500c3-1 6.500-.7 9 .8M5 9.200c2.700-.8 5.500-.5 7.500.7M5.500 11.800c2-.6 4.500-.4 6.200.7" stroke="#10241a" strokeWidth="1.300" /></> },
  { name: "Music", icon: <><rect x="1" y="1" width="16" height="16" rx="3.500" fill="#ee3f52" /><path d="M7 12.500v-7l5.500-1.200v7" stroke="#fff" strokeWidth="1.200" /><Dot x={5.800} y={12.700} c="#fff" r={1.600} /><Dot x={11.300} y={11.500} c="#fff" r={1.600} /></> },
  { name: "Chrome", open: true, icon: <><circle cx="9" cy="9" r="7.500" fill="#f3c432" /><path d="M2.500 5.200a7.500 7.500 0 0 1 13 0L9 7z" fill="#e04a3a" /><path d="M2.500 5.200 7 10l1 6.400A7.500 7.500 0 0 1 2.500 5.200z" fill="#2fa152" /><circle cx="9" cy="9" r="3.300" fill="#3e82ee" stroke="#fff" /><circle cx="13" cy="13" r="4" fill="#77898f" /><path d="M11.800 15v-4h1.500q1 1 0 2h-1.500m1.500 0 1 2" stroke="#dfe6e8" strokeWidth=".8" /></> },
  { name: "Autodesk Access", open: true, icon: <><path d="M2 1.500h12v13H2z" fill="#d71f47" /><path d="M5.500 11 8.700 4h1.500l.8 7M7 9h4" stroke="#fff" strokeWidth="1.300" /><circle cx="13" cy="13" r="4" fill="#1879cc" /><path d="M13 10.800v4.400" stroke="#fff" strokeWidth="1.300" /></> },
]

function Taskbar() {
  return (
    <footer className="flex h-[27px] shrink-0 items-stretch bg-[#1d211e] text-white">
      <button type="button" aria-label="Start" className="flex w-8 items-center justify-center bg-[#161b13]">
        <svg viewBox="0 0 12 12" className="size-3"><path d="M0 1.700 5.300 1v4.600H0zM6 .9 12 0v5.600H6zM0 6.300h5.300V11L0 10.300zM6 6.300h6V12l-6-.9z" fill="#fff" /></svg>
      </button>
      <label className="flex w-48 items-center border-l border-[#454846] bg-[#303231] pl-[7px]">
        <svg viewBox="0 0 12 12" fill="none" className="size-[11px]"><circle cx="7" cy="4.500" r="3.800" stroke="#e6e6e6" /><path d="M4.300 7.300.7 11.300" stroke="#e6e6e6" /></svg>
        <input aria-label="Search Windows" placeholder="Type here to search" className="ml-2 w-[118px] bg-transparent text-[9px] placeholder:text-[#d5d7d6]" />
        <svg viewBox="0 0 36 18" className="h-[18px] w-9">
          <path d="M16 1q1.500 6.500 7 8-5.500 1.500-7 8-1.500-6.500-7-8 5.500-1.500 7-8z" fill="#fcc52d" stroke="#fcc52d" />
          <path d="M29 7q.6 3.500 4 4.500-3.400 1-4 4.500-.6-3.500-4-4.500 3.400-1 4-4.500z" fill="#f8d05b" />
          <path d="M4 11q.6 2.500 3 3-2.400.7-3 3.500-.6-2.800-3-3.500 2.400-.5 3-3z" fill="#3f9fe0" stroke="#3f9fe0" strokeWidth=".7" />
          <circle cx="26" cy="3" r="1.500" fill="#e0803b" /><circle cx="34.500" cy="15.500" r="1.200" fill="#65b35a" />
        </svg>
      </label>
      <nav aria-label="Apps" className="flex w-[425px]">
        {apps.map((app) => (
          <button key={app.name} type="button" aria-label={app.name} className="flex flex-1 justify-center">
            <span className={app.open ? "flex h-full w-[27px] items-center justify-center border-b-2 border-[#77b5e2] pt-[2px]" : "flex h-full items-center justify-center"}>
              <svg viewBox="0 0 18 18" fill="none" className="size-[17px]">{app.icon}</svg>
            </span>
          </button>
        ))}
        <button type="button" aria-label="SketchUp" className="flex flex-1 items-center justify-center border-b-2 border-[#77b5e2] bg-[#494e4d] pt-[2px]">
          <SketchUpMark className="size-4 bg-white" />
        </button>
      </nav>
      <div className="ml-auto flex items-center text-[9px]">
        <svg viewBox="0 0 16 16" fill="none" className="mr-[5px] size-4"><path d="M1 9.500c5 0 9-2 12-6" stroke="#5bbf3a" strokeWidth="1.800" /><path d="m9 1.500 6.500-.5-.5 6.500z" fill="#5bbf3a" /><path d="M2 15v-2M5.500 15v-3M9.500 15v-5M14 15V9" stroke="#5bbf3a" strokeWidth="2.500" /></svg>
        <span className="w-[27px]">IHSG</span>
        <span className="w-[46px] text-[#2fae3e]">+1,17%</span>
        <button type="button" aria-label="Show hidden icons" className="mr-[11px]"><svg viewBox="0 0 8 5" fill="none" className="h-[5px] w-2"><path d="m.5 4.500 3.500-4 3.500 4" stroke="#fff" /></svg></button>
        <div className="flex w-[58px] items-center justify-between">
          <svg viewBox="0 0 12 12" fill="none" className="size-[11px]"><path d="M2.500 3h6v6h-6zM8.500 5l2-1v4l-2-1M3 1h5M3 11h5" stroke="#eee" /></svg>
          <svg viewBox="0 0 12 12" fill="none" className="size-3"><path d="M1 2.500 10.500 1v7M1 2.500V10h6M5 4.500h3M5 4.500V8h2" stroke="#eee" /><circle cx="9.500" cy="9.500" r="2.500" fill="#2f86d8" /></svg>
          <svg viewBox="0 0 12 12" fill="none" className="size-3"><path d="M4.500 2H11v6H3V6M1 1v3h3V1M7 8v2.500M4.500 10.500h5" stroke="#eee" /></svg>
          <svg viewBox="0 0 12 12" fill="none" className="size-3"><path d="M1 4.500h2l2.500-2.500v8L3 7.500H1zM7 4.500q1.200 1.500 0 3M8.700 3q2.300 3 0 6M10.300 1.800q3 4 0 8.400" stroke="#eee" strokeWidth=".9" /></svg>
        </div>
        <div className="ml-[6px] flex w-[40px] flex-col items-center font-[Roboto,sans-serif] text-[8px] leading-3 whitespace-nowrap">
          <p>21:25</p>
          <p>03/01/2026</p>
        </div>
        <button type="button" aria-label="5 notifications" className="relative ml-[10px] h-4 w-[18px]">
          <svg viewBox="0 0 12 12" className="size-[11px]"><path d="M0 0h12v9H6l-2.500 2.500V9H0z" fill="#fff" /><path d="M2 2.500h8M2 4.500h8M2 6.500h5" stroke="#222" strokeWidth=".8" /></svg>
          <span className="absolute right-[2px] bottom-[-2px] flex size-[10px] items-center justify-center rounded-full border border-[#999] bg-[#333] text-[7px] leading-none">5</span>
        </button>
        <span className="mr-[2px] ml-1 h-[27px] border-l border-[#555]" />
      </div>
    </footer>
  )
}

export default function App() {
  const [sharing, setSharing] = useState(true)

  return (
    <div className="relative flex h-screen flex-col overflow-hidden bg-[#eff3f4] font-['Open_Sans','Noto_Sans',sans-serif] text-[#333]">
      <header className="shrink-0">
        <div className="flex h-[15px] items-center bg-white pr-[2px] pl-[2px]">
          <SketchUpMark className="size-[10px]" />
          <span className="ml-[3px] flex-1 font-[Roboto,sans-serif] text-[8px] text-[#111]">3D BALOK DAN KOLOM (1)* - SketchUp 2024</span>
          <button type="button" aria-label="Minimize" className="flex h-full w-[30px] items-center justify-center"><span className="w-[7px] border-t border-[#222]" /></button>
          <button type="button" aria-label="Restore" className="flex h-full w-[30px] items-center justify-center">
            <svg viewBox="0 0 8 8" fill="none" className="size-[7px]"><path d="M.5 2.500h5v5h-5zM2.500 2.500v-2h5v5h-2" stroke="#222" /></svg>
          </button>
          <button type="button" aria-label="Close" className="flex h-full w-[30px] items-center justify-center">
            <svg viewBox="0 0 8 8" className="size-[7px]"><path d="m.5.5 7 7m0-7-7 7" stroke="#222" /></svg>
          </button>
        </div>
        <nav aria-label="Menu" className="flex h-[14px] items-center gap-px pl-[3px] text-[8px]">
          {["File", "Edit", "View", "Camera", "Draw", "Tools", "Window", "Extensions", "Help"].map((m) => (
            <button key={m} type="button" className={m === "Extensions" ? "h-[13px] bg-[#dbebf1] px-1" : "h-[13px] px-1"}>{m}</button>
          ))}
        </nav>
        <div className="flex h-6 border-t border-[#dde2e4]">
          <div className="flex w-[573px] items-center justify-between border-r border-[#dde2e4] pr-[2px] pl-[7px]"><ToolRow items={draw} /></div>
          <div className="flex w-[52px] items-center justify-between border-r border-[#dde2e4] pr-px"><Grip /><ToolRow items={["New File", "Add Person"]} /></div>
          <div className="flex w-[72px] items-center justify-between border-r border-[#dde2e4] pr-px"><Grip /><ToolRow items={["Shell", "Rope Box", "Green Gem"]} /></div>
          <div className="flex w-[150px] items-center justify-between border-r border-[#dde2e4] pr-px"><Grip /><ToolRow items={edit} /></div>
          <div className="flex w-[144px] items-center justify-between border-r border-[#dde2e4] pr-px"><Grip /><ToolRow items={snaps} /></div>
        </div>
        <div className="flex h-[25px] border-y border-t-[#dde2e4] border-b-[#b5babc]">
          <div className="flex w-[991px] items-center justify-between border-r border-[#dde2e4] pr-[2px] pl-[7px]"><ToolRow items={plugins} /></div>
          <div className="flex w-[92px] items-center justify-between"><Grip /><ToolRow items={sections} /></div>
        </div>
      </header>

      <main className="flex min-h-0 flex-1">
        <div className="w-[46px] shrink-0 pt-[7px]">
          <div className="flex h-[494px] flex-col justify-between pr-[2px] pl-[1px]">
            {palette.map((row, i) =>
              row ? (
                <div key={i} className="flex h-[21px] items-center">
                  {row.map((name) => <Tool key={name} name={name} />)}
                </div>
              ) : (
                <hr key={i} className="mx-1 border-[#8f9598]" />
              )
            )}
          </div>
        </div>
        <section className="relative min-w-0 flex-1 overflow-hidden">
          <Model />
          <span className="absolute top-0 left-[2px] text-[7px] leading-[9px] text-black">Front</span>
        </section>
        <Tray />
      </main>

      <div className="flex h-6 shrink-0 items-center pl-[7px]">
        <label htmlFor="vcb" className="w-[83px] text-[8px] text-[#555]">Measurements</label>
        <input id="vcb" className="h-[14px] w-[107px] rounded-[2px] border border-[#bcc2c5] bg-[#f4f7f8] text-[8px]" />
      </div>
      <div className="flex h-[21px] shrink-0 items-center gap-2 border-t border-[#e2e6e8] pl-[6px]">
        <button type="button" aria-label="Geo-location"><svg viewBox="0 0 10 10" fill="none" className="size-[10px]"><circle cx="5" cy="5" r="4.500" stroke="#999" strokeWidth=".8" /><path d="M5 8V5.500M5 2.500q1.500 0 1.500 1.300T5 5.500 3.500 3.800 5 2.500z" stroke="#888" /></svg></button>
        <button type="button" aria-label="Credits"><svg viewBox="0 0 10 10" fill="none" className="size-[10px]"><circle cx="5" cy="5" r="4.300" stroke="#111" /><path d="M5 2v6M4 4.500h2" stroke="#111" strokeWidth="1.300" /></svg></button>
        <span className="ml-[2px] h-4 border-l border-[#d5d9db]" />
      </div>
      <Taskbar />

      {sharing && (
        <div role="status" className="absolute bottom-[54px] left-1/2 flex h-7 w-[299px] -translate-x-1/2 items-center bg-[#272a2b] pr-[6px] pl-[7px] font-[Roboto,sans-serif] text-[9px] text-white shadow-lg shadow-black/40">
          <span className="h-2 w-1 border-x border-[#ddd]" />
          <p className="ml-[7px] flex-1 whitespace-nowrap">screen-recorder.com is sharing your screen.</p>
          <button type="button" onClick={() => setSharing(false)} className="h-[21px] w-[65px] rounded-[2px] bg-[#2a62d0] text-center whitespace-nowrap">Stop sharing</button>
          <a href="#hide" className="ml-[7px] text-[9px] text-[#a9c7fa] underline">Hide</a>
        </div>
      )}
      <svg viewBox="0 0 9 14" className="pointer-events-none absolute top-[11px] left-[200px] h-[14px] w-[9px]"><path d="M.7.7v10l2.300-2 1.700 4 1.700-.7L4.800 8.200h3z" fill="#fff" stroke="#333" strokeWidth=".9" /></svg>
    </div>
  )
}
